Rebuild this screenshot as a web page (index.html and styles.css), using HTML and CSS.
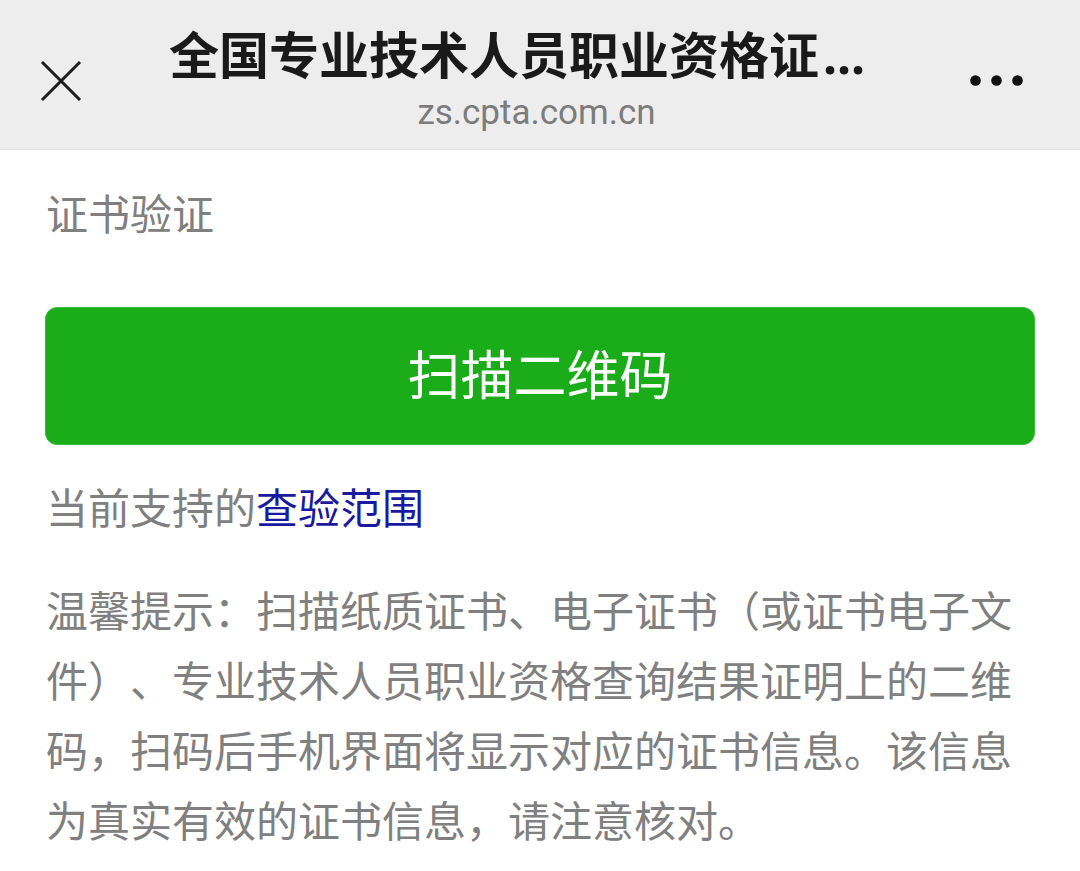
FILE: index.html
```html
<!DOCTYPE html>
<html lang="zh-CN">
<head>
<meta charset="UTF-8" />
<meta name="viewport" content="width=device-width, initial-scale=1" />
<title>证书验证</title>
<link rel="stylesheet" href="styles.css">
</head>
<body>

<header class="topbar">
  <button class="close-btn" aria-label="关闭">
    <svg width="42" height="42" viewBox="0 0 42 42">
      <path d="M2 2 L40 40 M40 2 L2 40" stroke="#1b1b1b" stroke-width="3" fill="none" />
    </svg>
  </button>
  <div class="title-box">
    <div class="page-title">全国专业技术人员职业资格证<span class="dots">...</span></div>
    <div class="page-url">zs.cpta.com.cn</div>
  </div>
  <button class="more-btn" aria-label="更多">
    <svg width="53" height="11" viewBox="0 0 53 11">
      <circle cx="5.5" cy="5.5" r="5.3" fill="#111" />
      <circle cx="26.5" cy="5.5" r="5.3" fill="#111" />
      <circle cx="47.5" cy="5.5" r="5.3" fill="#111" />
    </svg>
  </button>
</header>

<main class="content">
  <p class="section-label">证书验证</p>
  <button class="scan-btn">扫描二维码</button>
  <p class="scope">当前支持的<a href="#">查验范围</a></p>
  <p class="tip">温馨提示：扫描纸质证书、电子证书（或证书电子文件）、专业技术人员职业资格查询结果证明上的二维码，扫码后手机界面将显示对应的证书信息。该信息为真实有效的证书信息，请注意核对。</p>
</main>

</body>
</html>
```

FILE: styles.css
```css
body {
  margin: 0;
  background: #fff;
  font-family: "Noto Sans CJK SC", "Noto Sans", sans-serif;
  text-spacing-trim: space-all;
}
button {
  border: none;
  background: none;
  padding: 0;
  cursor: pointer;
}

/* top bar */
.topbar {
  display: flex;
  align-items: center;
  height: 150px;
  padding-left: 40px;
  background: #ededed;
  border-bottom: 1px solid #e4e4e4;
  box-sizing: border-box;
}
.close-btn {
  width: 42px; height: 42px;
  margin-top: 12px;
  display: flex;
}
.title-box {
  align-self: flex-start;
  width: 740px;
  margin-left: 87px;
  padding-top: 22px;
}
.page-title {
  font-size: 50px;
  line-height: 60px;
  font-weight: bold;
  color: #1a1a1a;
  white-space: nowrap;
}
.dots {
  font-family: "Noto Sans", sans-serif;
  margin-left: 4px;
}
.page-url {
  margin-top: 7px;
  margin-left: -5px;
  font-family: Roboto, "Noto Sans", sans-serif;
  font-size: 35px;
  line-height: 42px;
  color: #7c7c7c;
  text-align: center;
}
.more-btn {
  width: 53px; height: 11px;
  margin-left: 61px;
  margin-top: 12px;
  display: flex;
}

/* page body */
.content {
  padding: 0 45px 0 46px;
}
.section-label {
  margin: 32px 0 0;
  font-size: 42px;
  line-height: 60px;
  color: #808080;
}
.scan-btn {
  display: block;
  width: 990px;
  height: 138px;
  margin: 65px 0 0 -1px;
  padding-bottom: 8px;
  background: #1aad19;
  border: 1px solid #3cbc3a;
  border-radius: 12px;
  color: #fff;
  font-family: "Noto Sans CJK SC", sans-serif;
  font-size: 53px;
  box-sizing: border-box;
}
.scope {
  margin: 31px 0 0;
  font-size: 42px;
  line-height: 60px;
  color: #808080;
}
.scope a {
  color: #1a1aa0;
  text-decoration: none;
}
.tip {
  margin: 38px 0 0;
  font-size: 42px;
  line-height: 70px;
  color: #808080;
}
```
